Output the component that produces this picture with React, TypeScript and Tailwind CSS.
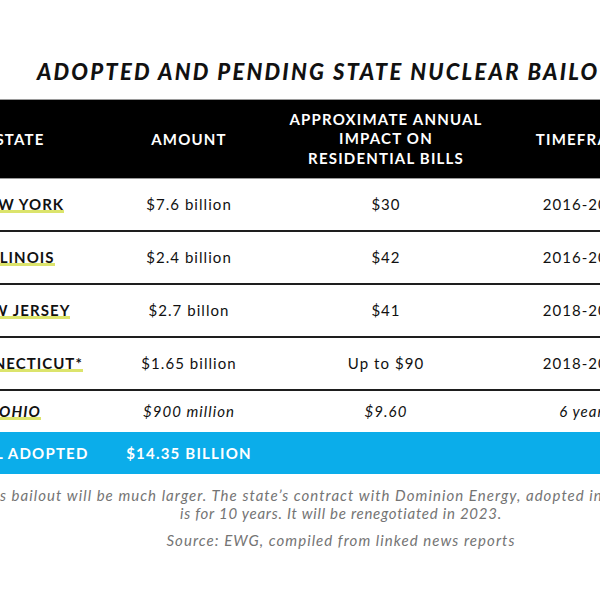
import React from 'react';

interface Row {
  state: string;
  amount: string;
  impact: string;
  time: string;
}

const rows: Row[] = [
  { state: 'NEW YORK', amount: '$7.6 billion', impact: '$30', time: '2016-2029' },
  { state: 'ILLINOIS', amount: '$2.4 billion', impact: '$42', time: '2016-2027' },
  { state: 'NEW JERSEY', amount: '$2.7 billon', impact: '$41', time: '2018-2022' },
  { state: 'CONNECTICUT*', amount: '$1.65 billion', impact: 'Up to $90', time: '2018-2029' },
];

// columns: state | amount | impact | timeframe | (off canvas)
const cols = 'grid grid-cols-[160px_178px_216px_182px_66px] items-center';

const Marker: React.FC<{ children: React.ReactNode }> = ({ children }) => (
  <span className="bg-[linear-gradient(to_top,#dce46c_3px,transparent_3px)]">{children}</span>
);

export default function App() {
  return (
    <div className="w-[600px] h-[600px] overflow-hidden bg-white font-[Lato,sans-serif] text-[#111]">
      <div className="w-[802px] -ml-[60px]">
        <h1 className="pt-[58px] pb-[13px] text-center text-[22px] leading-[28px] font-black italic tracking-[0.1em] whitespace-nowrap">
          ADOPTED AND PENDING STATE NUCLEAR BAILOUTS
        </h1>

        {/* header */}
        <div className={`${cols} h-[80px] bg-black border-y border-[#9a9a9a] text-white text-[15px] font-bold tracking-[0.08em] text-center`}>
          <div>STATE</div>
          <div>AMOUNT</div>
          <div className="leading-[19.5px]">
            APPROXIMATE ANNUAL
            <br />
            IMPACT ON
            <br />
            RESIDENTIAL BILLS
          </div>
          <div>TIMEFRAME</div>
          <div />
        </div>

        {rows.map((r) => (
          <div key={r.state} className={`${cols} h-[53px] border-b-2 border-[#1e1e1e] text-[15px] tracking-[0.07em] text-center`}>
            <div className="font-bold">
              <Marker>{r.state}</Marker>
            </div>
            <div>{r.amount}</div>
            <div>{r.impact}</div>
            <div className="whitespace-nowrap">{r.time}</div>
            <div />
          </div>
        ))}

        <div className={`${cols} h-[41px] text-[15px] italic tracking-[0.07em] text-center`}>
          <div className="font-bold">
            <Marker>OHIO</Marker>
          </div>
          <div>$900 million</div>
          <div>$9.60</div>
          <div>6 years</div>
          <div />
        </div>

        {/* total */}
        <div className={`${cols} h-[42px] bg-[#0badea] text-white text-[15px] font-bold tracking-[0.08em] text-center`}>
          <div className="whitespace-nowrap">TOTAL ADOPTED</div>
          <div>$14.35 BILLION</div>
          <div />
          <div />
          <div />
        </div>

        <div className="pt-[12px] text-[15px] leading-[18px] italic text-[#747474] tracking-[0.05em] whitespace-nowrap">
          <div className="flex pl-[60px] tracking-[0.07em]">
            <div className="w-0 flex justify-end">
              <span>*Connecticut’</span>
            </div>
            <span>s bailout will be much larger. The state’s contract with Dominion Energy, adopted in 2019,</span>
          </div>
          <p className="text-center">is for 10 years. It will be renegotiated in 2023.</p>
          <p className="mt-[9px] text-center tracking-[0.07em]">Source: EWG, compiled from linked news reports</p>
        </div>
      </div>
    </div>
  );
}
